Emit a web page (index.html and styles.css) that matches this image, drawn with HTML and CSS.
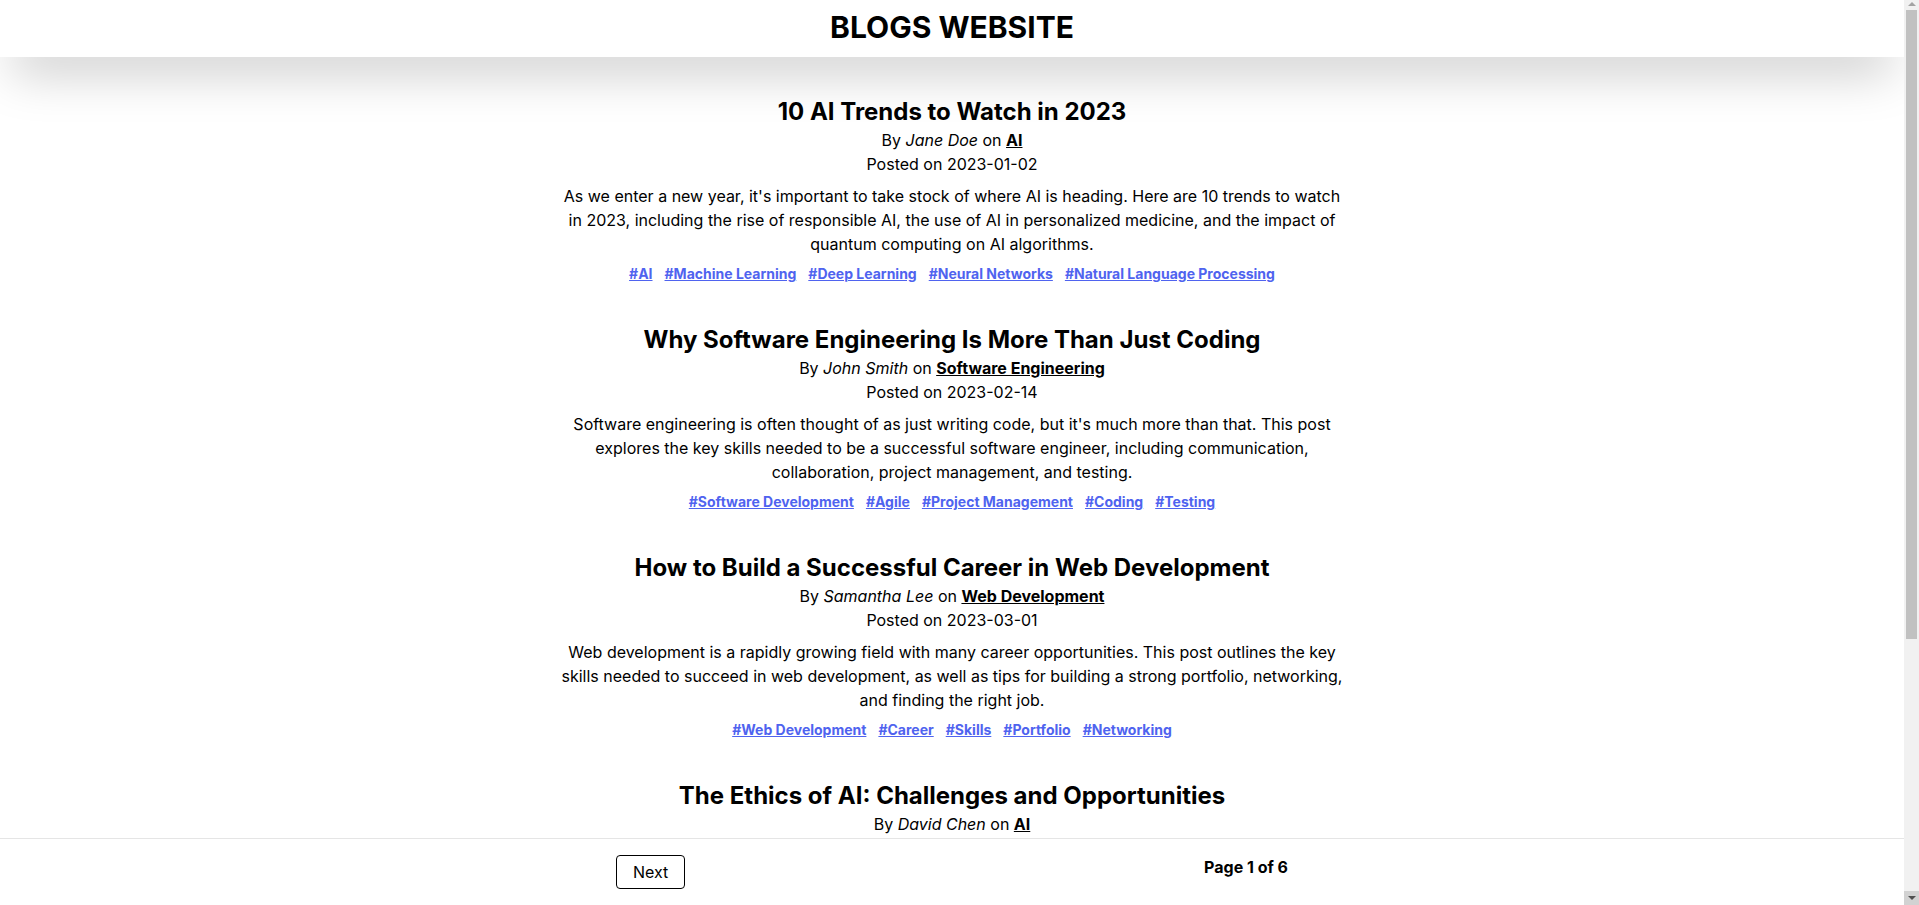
FILE: index.html
```html
<!DOCTYPE html>
<html lang="en">
<head>
<meta charset="utf-8">
<title>Blogs Website</title>
<link rel="stylesheet" href="styles.css">
</head>
<body>
<header class="site-header">
  <h1 class="site-title">BLOGS WEBSITE</h1>
</header>

<main class="posts">
  <article class="post">
    <h2 class="post-title">10 AI Trends to Watch in 2023</h2>
    <p class="post-meta">By <em class="post-author">Jane Doe</em> on <a href="#" class="post-cat">AI</a></p>
    <p class="post-date">Posted on 2023-01-02</p>
    <p class="post-excerpt">As we enter a new year, it's important to take stock of where AI is heading. Here are 10 trends to watch in 2023, including the rise of responsible AI, the use of AI in personalized medicine, and the impact of quantum computing on AI algorithms.</p>
    <div class="post-tags">
      <a href="#" class="tag">#AI</a>
      <a href="#" class="tag">#Machine Learning</a>
      <a href="#" class="tag">#Deep Learning</a>
      <a href="#" class="tag">#Neural Networks</a>
      <a href="#" class="tag">#Natural Language Processing</a>
    </div>
  </article>

  <article class="post">
    <h2 class="post-title">Why Software Engineering Is More Than Just Coding</h2>
    <p class="post-meta">By <em class="post-author">John Smith</em> on <a href="#" class="post-cat">Software Engineering</a></p>
    <p class="post-date">Posted on 2023-02-14</p>
    <p class="post-excerpt">Software engineering is often thought of as just writing code, but it's much more than that. This post explores the key skills needed to be a successful software engineer, including communication, collaboration, project management, and testing.</p>
    <div class="post-tags">
      <a href="#" class="tag">#Software Development</a>
      <a href="#" class="tag">#Agile</a>
      <a href="#" class="tag">#Project Management</a>
      <a href="#" class="tag">#Coding</a>
      <a href="#" class="tag">#Testing</a>
    </div>
  </article>

  <article class="post">
    <h2 class="post-title">How to Build a Successful Career in Web Development</h2>
    <p class="post-meta">By <em class="post-author">Samantha Lee</em> on <a href="#" class="post-cat">Web Development</a></p>
    <p class="post-date">Posted on 2023-03-01</p>
    <p class="post-excerpt">Web development is a rapidly growing field with many career opportunities. This post outlines the key skills needed to succeed in web development, as well as tips for building a strong portfolio, networking, and finding the right job.</p>
    <div class="post-tags">
      <a href="#" class="tag">#Web Development</a>
      <a href="#" class="tag">#Career</a>
      <a href="#" class="tag">#Skills</a>
      <a href="#" class="tag">#Portfolio</a>
      <a href="#" class="tag">#Networking</a>
    </div>
  </article>

  <article class="post">
    <h2 class="post-title">The Ethics of AI: Challenges and Opportunities</h2>
    <p class="post-meta">By <em class="post-author">David Chen</em> on <a href="#" class="post-cat">AI</a></p>
    <p class="post-date">Posted on 2023-03-15</p>
    <p class="post-excerpt">As AI becomes more powerful and pervasive, it raises important ethical questions. This post examines the challenges of bias, privacy, and accountability in AI systems, and the opportunities to build technology that benefits everyone.</p>
    <div class="post-tags">
      <a href="#" class="tag">#AI</a>
      <a href="#" class="tag">#Ethics</a>
      <a href="#" class="tag">#Bias</a>
      <a href="#" class="tag">#Privacy</a>
      <a href="#" class="tag">#Accountability</a>
    </div>
  </article>

  <article class="post">
    <h2 class="post-title">5 Tips for Writing Clean, Maintainable Code</h2>
    <p class="post-meta">By <em class="post-author">Emily Davis</em> on <a href="#" class="post-cat">Software Engineering</a></p>
    <p class="post-date">Posted on 2023-04-03</p>
    <p class="post-excerpt">Clean code is easier to read, test, and change. This post shares five practical tips for writing maintainable code, from choosing meaningful names to keeping functions small and writing tests that document intent.</p>
    <div class="post-tags">
      <a href="#" class="tag">#Clean Code</a>
      <a href="#" class="tag">#Best Practices</a>
      <a href="#" class="tag">#Refactoring</a>
      <a href="#" class="tag">#Testing</a>
    </div>
  </article>
</main>

<footer class="pager">
  <div class="pager-inner">
    <button type="button" class="pager-btn">Next</button>
    <span class="pager-info">Page 1 of 6</span>
  </div>
</footer>

<div class="scrollbar" aria-hidden="true">
  <span class="scroll-arrow scroll-arrow-up"></span>
  <span class="scroll-thumb"></span>
  <span class="scroll-btn-down"><span class="scroll-arrow scroll-arrow-down"></span></span>
</div>
</body>
</html>
```

FILE: styles.css
```css
* {
  box-sizing: border-box;
}

html, body {
  margin: 0;
  padding: 0;
}

body {
  margin-right: 15px;
  font-family: Inter, "Noto Sans", sans-serif;
  font-size: 16px;
  line-height: 24px;
  color: #000;
  background: #fff;
}

.site-header {
  position: sticky;
  top: 0;
  z-index: 10;
  height: 57px;
  padding-top: 9px;
  background: #fff;
  box-shadow: 0 25px 50px -12px rgba(0, 0, 0, 0.25);
  text-align: center;
}

.site-title {
  margin: 0;
  font-size: 30px;
  line-height: 36px;
  font-weight: 700;
}

.posts {
  max-width: 788px;
  margin: 0 auto;
  padding: 39px 0 24px;
  text-align: center;
}

.post {
  margin-bottom: 40px;
}

.post-title {
  margin: 0;
  font-size: 24px;
  line-height: 32px;
  font-weight: 700;
}

.post-meta,
.post-date {
  margin: 0;
}

.post-author {
  font-style: italic;
}

.post-cat {
  color: #000;
  font-weight: 700;
  text-decoration: underline;
}

.post-excerpt {
  margin: 8px 0 0;
}

.post-tags {
  margin-top: 8px;
  display: flex;
  flex-wrap: wrap;
  justify-content: center;
  gap: 0 12px;
  font-size: 14px;
  line-height: 20px;
}

.tag {
  color: #4f63ef;
  font-weight: 700;
  text-decoration: underline;
}

.pager {
  position: fixed;
  left: 0;
  right: 15px;
  bottom: 0;
  z-index: 10;
  background: #fff;
  border-top: 1px solid #e5e5e5;
  padding: 16px 0;
}

.pager-inner {
  max-width: 768px;
  margin: 0 auto;
  padding: 0 48px;
  display: flex;
  justify-content: space-between;
  align-items: flex-start;
}

.pager-btn {
  font-family: inherit;
  font-size: 16px;
  line-height: 24px;
  color: #000;
  background: #fff;
  border: 1px solid #000;
  border-radius: 4px;
  padding: 4px 16px;
  cursor: pointer;
}

.pager-info {
  font-weight: 700;
}

/* simulated browser scrollbar */
.scrollbar {
  position: fixed;
  top: 0;
  right: 0;
  bottom: 0;
  width: 15px;
  z-index: 20;
  background: #f1f1f1;
  display: flex;
  flex-direction: column;
  align-items: center;
}

.scroll-arrow {
  width: 0;
  height: 0;
  border-left: 4px solid transparent;
  border-right: 4px solid transparent;
}

.scroll-arrow-up {
  margin-top: 2px;
  border-bottom: 4px solid #a3a3a3;
}

.scroll-thumb {
  margin-top: 4px;
  width: 11px;
  height: 629px;
  background: #c1c1c1;
}

.scroll-btn-down {
  margin-top: auto;
  width: 15px;
  height: 14px;
  background: #d2d2d2;
  display: flex;
  align-items: center;
  justify-content: center;
}

.scroll-arrow-down {
  border-top: 4px solid #505050;
}
```
